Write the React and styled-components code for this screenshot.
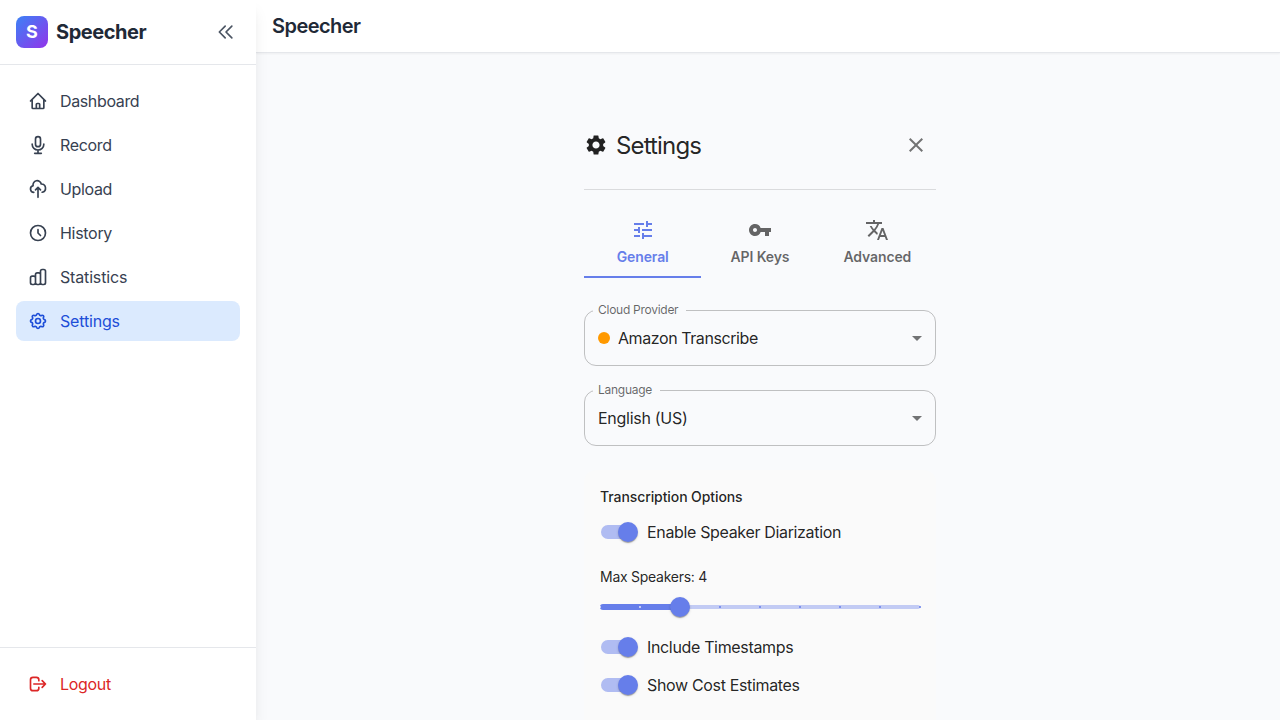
import React from "react";
import styled, { createGlobalStyle } from "styled-components";
import {
  HiOutlineHome,
  HiOutlineMicrophone,
  HiOutlineCloudUpload,
  HiOutlineClock,
  HiOutlineChartBar,
  HiOutlineCog,
  HiOutlineLogout,
  HiOutlineChevronDoubleLeft,
} from "react-icons/hi";
import { MdSettings, MdClose, MdTune, MdVpnKey, MdTranslate, MdArrowDropDown } from "react-icons/md";

const GlobalStyle = createGlobalStyle`
  *, *::before, *::after { box-sizing: border-box; }
  body {
    margin: 0;
    font-family: Inter, "Noto Sans", sans-serif;
    background: #f9fafb;
    overflow: hidden;
  }
  svg { display: block; flex: none; }
  h1, h2, h3, p { margin: 0; }
`;

const Shell = styled.div`
  display: flex;
  height: 100vh;
  overflow: hidden;
`;

const Sidebar = styled.aside`
  position: relative;
  z-index: 2;
  display: flex;
  flex-direction: column;
  flex: none;
  width: 256px;
  background: #fff;
  box-shadow: 0 10px 15px -3px rgba(0, 0, 0, 0.1), 0 4px 6px -4px rgba(0, 0, 0, 0.1);
`;

const Brand = styled.div`
  display: flex;
  align-items: center;
  height: 65px;
  padding: 0 16px;
  border-bottom: 1px solid #e5e7eb;
`;

const BrandMark = styled.div`
  display: grid;
  place-items: center;
  width: 32px;
  height: 32px;
  border-radius: 8px;
  background: linear-gradient(to bottom right, #3b82f6, #9333ea);
  color: #fff;
  font-size: 18px;
  line-height: 28px;
  font-weight: 700;
`;

const BrandName = styled.span`
  flex: 1;
  margin-left: 8px;
  color: #1f2937;
  font-size: 20px;
  line-height: 28px;
  font-weight: 700;
  letter-spacing: -0.45px;
`;

const IconButton = styled.button`
  padding: ${(p) => p.$pad}px;
  border: 0;
  background: none;
  color: ${(p) => p.$color};
  cursor: pointer;
`;

const Nav = styled.nav`
  display: flex;
  flex-direction: column;
  gap: 4px;
  flex: 1;
  padding: 16px;
`;

const NavItem = styled.a`
  display: flex;
  align-items: center;
  gap: 12px;
  height: 40px;
  padding: 0 12px;
  border-radius: 8px;
  font-size: 16px;
  line-height: 24px;
  letter-spacing: ${(p) => p.$tracking}px;
  color: ${(p) => (p.$danger ? "#dc2626" : p.$active ? "#1d4ed8" : "#374151")};
  background: ${(p) => (p.$active ? "#dbeafe" : "transparent")};
`;

const SidebarFooter = styled.div`
  padding: 16px;
  border-top: 1px solid #e5e7eb;
`;

const Main = styled.div`
  display: flex;
  flex-direction: column;
  flex: 1;
  min-width: 0;
`;

const TopBar = styled.header`
  flex: none;
  position: relative;
  height: 53px;
  padding: 12px 16px;
  background: #fff;
  border-bottom: 1px solid #e5e7eb;
  box-shadow: 0 1px 2px rgba(0, 0, 0, 0.05);
`;

const TopTitle = styled.h1`
  color: #1f2937;
  font-size: 20px;
  line-height: 28px;
  font-weight: 600;
  letter-spacing: -0.55px;
`;

const Content = styled.main`
  flex: 1;
  min-height: 0;
  overflow: hidden;
  padding: 72px 16px 0 0;
  background: #f9fafc;
  color: rgba(0, 0, 0, 0.87);
`;

const Panel = styled.section`
  width: 352px;
  margin: 0 auto;
`;

const PanelHeader = styled.div`
  display: flex;
  align-items: center;
  height: 65px;
  padding-bottom: 25px;
  border-bottom: 1px solid rgba(0, 0, 0, 0.12);
`;

const PanelTitle = styled.h2`
  flex: 1;
  margin-left: 8px;
  padding-top: 2px;
  font-size: 24px;
  line-height: 32px;
  font-weight: 400;
  letter-spacing: -0.85px;
`;

const Tabs = styled.div`
  display: grid;
  grid-template-columns: repeat(3, 1fr);
  height: 72px;
  margin-top: 16px;
`;

const Tab = styled.button`
  display: flex;
  flex-direction: column;
  align-items: center;
  justify-content: center;
  gap: 6px;
  padding: 2px 0 0;
  border: 0;
  border-bottom: 2px solid ${(p) => (p.$active ? "#667eea" : "transparent")};
  background: none;
  color: ${(p) => (p.$active ? "#667eea" : "rgba(0, 0, 0, 0.6)")};
  font-family: inherit;
  font-size: 14px;
  font-weight: 600;
  line-height: 17.5px;
  letter-spacing: -0.12px;
  cursor: pointer;
`;

const Field = styled.fieldset`
  display: flex;
  align-items: center;
  min-width: 0;
  height: 62px;
  margin: ${(p) => p.$top}px 0 0;
  padding: 0 6px 6px 13px;
  border: 1px solid rgba(0, 0, 0, 0.23);
  border-radius: 12px;
  font-size: 16px;
`;

const Legend = styled.legend`
  height: 13px;
  margin-left: -5px;
  padding: 0 8px 0 5px;
  color: rgba(0, 0, 0, 0.6);
  font-size: 12px;
  line-height: 11px;
  letter-spacing: -0.27px;
`;

const FieldValue = styled.span`
  flex: 1;
  line-height: 23px;
  letter-spacing: ${(p) => p.$tracking}px;
`;

const Dot = styled.span`
  width: 12px;
  height: 12px;
  margin-right: 8px;
  border-radius: 50%;
  background: #ff9900;
`;

const Options = styled.div`
  height: 280px;
  margin-top: 24px;
  padding: 16px;
  border-radius: 12px;
  background: #fafafa;
`;

const OptionsTitle = styled.h3`
  margin-bottom: 5px;
  font-size: 14px;
  line-height: 22px;
  font-weight: 500;
  letter-spacing: -0.09px;
`;

const OptionRow = styled.label`
  display: flex;
  align-items: center;
  height: 38px;
  padding-left: 1px;
  font-size: 16px;
  line-height: 24px;
  letter-spacing: -0.34px;
`;

const SwitchTrack = styled.span`
  display: flex;
  align-items: center;
  justify-content: flex-end;
  width: 34px;
  height: 14px;
  margin-right: 12px;
  border-radius: 7px;
  background: rgba(102, 126, 234, 0.5);
`;

const Thumb = styled.span`
  flex: none;
  width: 20px;
  height: 20px;
  border-radius: 50%;
  background: #667eea;
  box-shadow: 0 2px 1px -1px rgba(0, 0, 0, 0.2), 0 1px 1px rgba(0, 0, 0, 0.14),
    0 1px 3px rgba(0, 0, 0, 0.12);
`;

const SwitchThumb = styled(Thumb)`
  margin-right: -3px;
`;

const SliderLabel = styled.p`
  margin: 16px 0 5px;
  font-size: 14px;
  line-height: 20px;
  letter-spacing: -0.26px;
`;

const Slider = styled.div`
  position: relative;
  display: flex;
  align-items: center;
  height: 30px;
  margin-bottom: 6px;
`;

const Rail = styled.span`
  width: 100%;
  height: 4px;
  border-radius: 12px;
  background: #667eea;
  opacity: 0.38;
`;

const Track = styled.span`
  position: absolute;
  left: 0;
  top: 12px;
  height: 6px;
  border-radius: 12px;
  background: #667eea;
`;

const Mark = styled.span`
  position: absolute;
  top: 14px;
  width: 2px;
  height: 2px;
  border-radius: 1px;
  transform: translateX(-1px);
  background: ${(p) => (p.$filled ? "#fff" : "#667eea")};
  opacity: ${(p) => (p.$filled ? 0.8 : 1)};
`;

const SliderThumb = styled(Thumb)`
  position: absolute;
  top: 5px;
  transform: translateX(-50%);
`;

const NAV = [
  { label: "Dashboard", Icon: HiOutlineHome, tracking: -0.37 },
  { label: "Record", Icon: HiOutlineMicrophone, tracking: -0.34 },
  { label: "Upload", Icon: HiOutlineCloudUpload, tracking: -0.34 },
  { label: "History", Icon: HiOutlineClock, tracking: -0.3 },
  { label: "Statistics", Icon: HiOutlineChartBar, tracking: -0.16 },
  { label: "Settings", Icon: HiOutlineCog, tracking: -0.18 },
];

const TABS = [
  { label: "General", Icon: MdTune },
  { label: "API Keys", Icon: MdVpnKey },
  { label: "Advanced", Icon: MdTranslate },
];

function SelectField({ label, value, dot, top, tracking }) {
  return (
    <Field $top={top}>
      <Legend>{label}</Legend>
      {dot && <Dot />}
      <FieldValue $tracking={tracking}>{value}</FieldValue>
      <MdArrowDropDown size={24} color="rgba(0, 0, 0, 0.54)" />
    </Field>
  );
}

function SwitchRow({ label }) {
  return (
    <OptionRow>
      <SwitchTrack>
        <SwitchThumb />
      </SwitchTrack>
      {label}
    </OptionRow>
  );
}

function SpeakerSlider({ value, min, max }) {
  const percent = (n) => ((n - min) / (max - min)) * 100;
  const steps = Array.from({ length: max - min + 1 }, (_, i) => min + i);
  return (
    <Slider>
      <Rail />
      <Track style={{ width: `${percent(value)}%` }} />
      {steps.map((n) => (
        <Mark key={n} $filled={n <= value} style={{ left: `${percent(n)}%` }} />
      ))}
      <SliderThumb style={{ left: `${percent(value)}%` }} />
    </Slider>
  );
}

export default function App() {
  return (
    <>
      <GlobalStyle />
      <Shell>
        <Sidebar>
          <Brand>
            <BrandMark>S</BrandMark>
            <BrandName>Speecher</BrandName>
            <IconButton $pad={4} $color="#4b5563" aria-label="Collapse sidebar">
              <HiOutlineChevronDoubleLeft size={20} />
            </IconButton>
          </Brand>
          <Nav>
            {NAV.map(({ label, Icon, tracking }) => (
              <NavItem key={label} $active={label === "Settings"} $tracking={tracking}>
                <Icon size={20} />
                {label}
              </NavItem>
            ))}
          </Nav>
          <SidebarFooter>
            <NavItem $danger $tracking={-0.3}>
              <HiOutlineLogout size={20} />
              Logout
            </NavItem>
          </SidebarFooter>
        </Sidebar>
        <Main>
          <TopBar>
            <TopTitle>Speecher</TopTitle>
          </TopBar>
          <Content>
            <Panel>
              <PanelHeader>
                <MdSettings size={24} />
                <PanelTitle>Settings</PanelTitle>
                <IconButton $pad={8} $color="rgba(0, 0, 0, 0.54)" aria-label="Close">
                  <MdClose size={24} />
                </IconButton>
              </PanelHeader>
              <Tabs>
                {TABS.map(({ label, Icon }) => (
                  <Tab key={label} $active={label === "General"}>
                    <Icon size={24} />
                    {label}
                  </Tab>
                ))}
              </Tabs>
              <SelectField
                label="Cloud Provider"
                value="Amazon Transcribe"
                dot
                top={26}
                tracking={-0.42}
              />
              <SelectField label="Language" value="English (US)" top={18} tracking={-0.28} />
              <Options>
                <OptionsTitle>Transcription Options</OptionsTitle>
                <SwitchRow label="Enable Speaker Diarization" />
                <SliderLabel>Max Speakers: 4</SliderLabel>
                <SpeakerSlider value={4} min={2} max={10} />
                <SwitchRow label="Include Timestamps" />
                <SwitchRow label="Show Cost Estimates" />
              </Options>
            </Panel>
          </Content>
        </Main>
      </Shell>
    </>
  );
}
